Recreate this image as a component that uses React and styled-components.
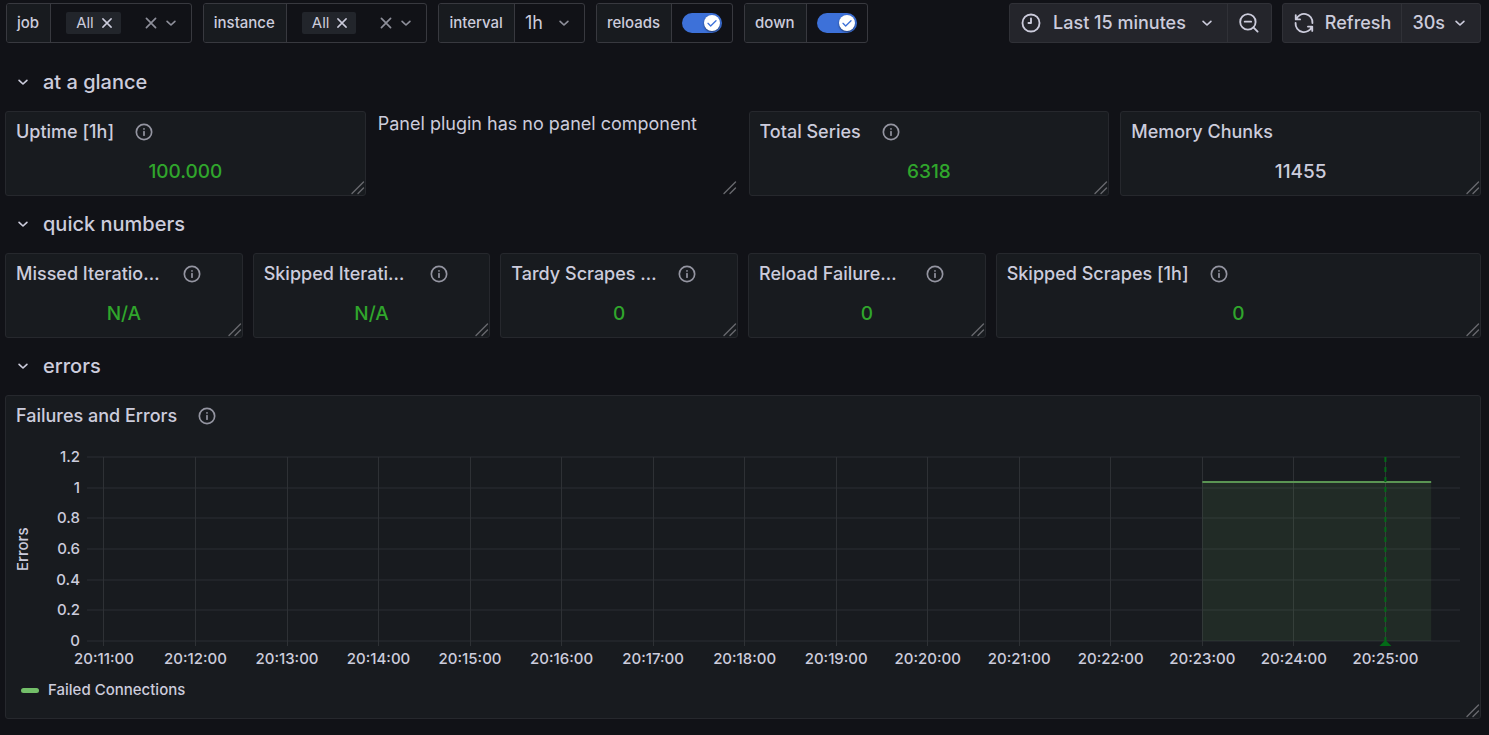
import React, { useId } from "react";
import styled, { createGlobalStyle } from "styled-components";

const color = {
  page: "#111217",
  panel: "#181b1f",
  panelBorder: "#26282d",
  fieldBorder: "#38393f",
  button: "#24252b",
  buttonBorder: "#303137",
  text: "#ccccdc",
  muted: "#8e8f9a",
  good: "#30a62c",
  series: "#73bf69",
  annotation: "#036b17",
  primary: "#3d71d9",
};

const GlobalStyle = createGlobalStyle`
  *, *::before, *::after { box-sizing: border-box; }
  body {
    margin: 0;
    background: ${color.page};
    color: ${color.text};
    font-family: Inter, "Liberation Sans", sans-serif;
    font-size: 18px;
    line-height: 24px;
  }
  button, input, select { font: inherit; color: inherit; }
`;

const Page = styled.div`
  padding: 3px 8px 17px 5px;
`;

/* ---------- icons ---------- */

const Svg = styled.svg`
  display: block;
  flex: none;
  width: ${(p) => p.$size}px;
  height: ${(p) => p.$size}px;
  fill: none;
  stroke: currentColor;
  stroke-width: ${(p) => p.$weight || 2};
  stroke-linecap: round;
  stroke-linejoin: round;
`;

const Chevron = ({ size = 20 }) => (
  <Svg $size={size} viewBox="0 0 24 24" aria-hidden="true">
    <path d="M7.3 10l4.7 4.4L16.7 10" />
  </Svg>
);

const Cross = ({ size = 20 }) => (
  <Svg $size={size} viewBox="0 0 24 24" aria-hidden="true">
    <path d="M6.5 6.5l11 11M17.5 6.5l-11 11" />
  </Svg>
);

const InfoIcon = () => (
  <Svg $size={20} viewBox="0 0 24 24" aria-hidden="true">
    <circle cx="12" cy="12" r="9.2" />
    <path d="M12 11.6v4.2M12 8.2v.1" />
  </Svg>
);

const ClockIcon = () => (
  <Svg $size={22} viewBox="0 0 24 24" aria-hidden="true">
    <circle cx="12" cy="12" r="9.3" />
    <path d="M12 7v5H9.2" />
  </Svg>
);

const ZoomOutIcon = () => (
  <Svg $size={22} viewBox="0 0 24 24" aria-hidden="true">
    <circle cx="10.8" cy="10.8" r="8.4" />
    <path d="M7.3 10.5h7M16.8 16.8l4.6 4.6" />
  </Svg>
);

const SyncIcon = () => (
  <Svg $size={22} viewBox="0 0 24 24" aria-hidden="true">
    <path d="M3 3.4v4.7h4.7M3.4 8.1A9.2 9.2 0 0 1 21.2 12M21 20.6v-4.7h-4.7M20.6 15.9A9.2 9.2 0 0 1 2.8 12" />
  </Svg>
);

/* ---------- toolbar ---------- */

const Toolbar = styled.header`
  display: flex;
  justify-content: space-between;
  padding-left: 1px;
  margin-bottom: 11px;
`;

const Group = styled.div`
  display: flex;
  gap: ${(p) => p.$gap}px;
`;

const Variable = styled.div`
  display: flex;
  height: 40px;
  border: 1px solid ${color.fieldBorder};
  border-radius: 3px;
`;

const VariableLabel = styled.label`
  display: flex;
  align-items: center;
  padding: 0 11px 0 10px;
  background: ${color.panel};
  border-right: 1px solid ${color.fieldBorder};
  border-radius: 2px 0 0 2px;
  font-size: 15px;
  font-weight: 500;
`;

const MultiValue = styled.div`
  display: flex;
  align-items: center;
  padding: 0 10px 0 15px;
  color: ${color.muted};
`;

const Chip = styled.span`
  display: flex;
  align-items: center;
  gap: 4px;
  height: 22px;
  margin-right: 20px;
  padding: 0 5px 0 10px;
  border-radius: 2px;
  background: #22252b;
  color: ${color.text};
  font-size: 15px;
`;

const IconButton = styled.button`
  display: flex;
  padding: 0;
  border: 0;
  background: none;
`;

const SelectBox = styled.div`
  display: grid;
  grid-template-columns: 1fr 30px;
  align-items: center;
  color: ${color.muted};
`;

const Select = styled.select`
  grid-area: 1 / 1 / 2 / 3;
  width: 69px;
  height: 38px;
  padding: 0 0 0 10px;
  appearance: none;
  border: 0;
  background: none;
  color: ${color.text};
`;

const SelectArrow = styled.span`
  grid-area: 1 / 2;
  pointer-events: none;
`;

const SwitchCell = styled.div`
  display: flex;
  align-items: center;
  padding: 0 10px;
`;

const Switch = styled.span`
  display: grid;
  align-items: center;
  justify-items: end;
`;

const SwitchInput = styled.input`
  grid-area: 1 / 1;
  appearance: none;
  width: 40px;
  height: 20px;
  margin: 0;
  border-radius: 10px;
  background: ${color.primary};
`;

const SwitchKnob = styled.span`
  grid-area: 1 / 1;
  width: 16px;
  height: 16px;
  margin-right: 2px;
  border-radius: 50%;
  background: #fff;
  color: ${color.primary};
  box-shadow: 0 1px 2px rgba(0, 0, 0, 0.5);
  pointer-events: none;
`;

const ButtonGroup = styled.div`
  display: flex;
  height: 40px;
  border: 1px solid ${color.buttonBorder};
  border-radius: 3px;
  background: ${color.button};
`;

const ToolButton = styled.button`
  display: flex;
  align-items: center;
  gap: ${(p) => p.$gap || 10}px;
  padding: ${(p) => p.$pad || "0 10px"};
  border: 0;
  background: none;
  font-weight: 500;
  & + & { border-left: 1px solid ${color.buttonBorder}; }
`;

function MultiVariable({ name }) {
  const id = useId();
  return (
    <Variable>
      <VariableLabel as="span" id={id}>{name}</VariableLabel>
      <MultiValue role="group" aria-labelledby={id}>
        <Chip>
          All
          <IconButton type="button" aria-label="Remove All"><Cross size={18} /></IconButton>
        </Chip>
        <IconButton type="button" aria-label={`Clear ${name}`}><Cross /></IconButton>
        <IconButton type="button" aria-label={`Open ${name}`}><Chevron /></IconButton>
      </MultiValue>
    </Variable>
  );
}

function SwitchVariable({ name }) {
  const id = useId();
  return (
    <Variable>
      <VariableLabel htmlFor={id}>{name}</VariableLabel>
      <SwitchCell>
        <Switch>
          <SwitchInput id={id} type="checkbox" defaultChecked />
          <SwitchKnob>
            <Svg $size={16} viewBox="0 0 24 24" aria-hidden="true">
              <path d="M6 12.5l4 4 8-8" />
            </Svg>
          </SwitchKnob>
        </Switch>
      </SwitchCell>
    </Variable>
  );
}

/* ---------- rows and panels ---------- */

const RowHeader = styled.h2`
  display: flex;
  align-items: center;
  height: 57px;
  margin: 0;
  padding-bottom: 2px;
  font-size: 20px;
  font-weight: 500;
`;

const RowToggle = styled.button`
  display: flex;
  align-items: center;
  gap: 10px;
  padding: 0 8px;
  border: 0;
  background: none;
`;

const Grid = styled.div`
  display: grid;
  grid-template-columns: repeat(${(p) => p.$columns}, minmax(0, 1fr));
  gap: ${(p) => p.$gap || 10}px;
`;

const PanelBox = styled.section`
  position: relative;
  grid-column: span ${(p) => p.$span || 1};
  min-height: 85px;
  border: 1px solid ${(p) => (p.$bare ? "transparent" : color.panelBorder)};
  border-radius: 3px;
  background: ${(p) => (p.$bare ? "none" : color.panel)};
`;

const PanelHeader = styled.div`
  display: flex;
  align-items: center;
  gap: 20px;
  height: 40px;
  padding: 0 40px 0 10px;
`;

const PanelTitle = styled.h3`
  margin: 0;
  overflow: hidden;
  white-space: nowrap;
  text-overflow: ellipsis;
  font-size: 18px;
  font-weight: 500;
`;

const InfoButton = styled(IconButton)`
  color: #9495a1;
`;

const Stat = styled.p`
  margin: 8px 0 0;
  text-align: center;
  font-size: 19px;
  font-weight: 500;
  color: ${(p) => (p.$plain ? color.text : color.good)};
`;

const Message = styled.p`
  margin: 0;
`;

const Corner = styled(Svg)`
  position: absolute;
  right: 0;
  bottom: 0;
  color: #67686e;
`;

function Panel({ title, info, children, span, bare }) {
  return (
    <PanelBox $span={span} $bare={bare}>
      {title && (
        <PanelHeader>
          <PanelTitle>{title}</PanelTitle>
          {info && (
            <InfoButton type="button" aria-label={`About ${title}`}><InfoIcon /></InfoButton>
          )}
        </PanelHeader>
      )}
      {children}
      <Corner $size={14} viewBox="0 0 14 14" $weight={1.4} aria-hidden="true">
        <path d="M1 12.5L12.5 1M7 12.5l5.5-5.5" />
      </Corner>
    </PanelBox>
  );
}

function Row({ title, columns, gap, children }) {
  return (
    <section>
      <RowHeader>
        <RowToggle type="button" aria-expanded="true"><Chevron />{title}</RowToggle>
      </RowHeader>
      <Grid $columns={columns} $gap={gap}>{children}</Grid>
    </section>
  );
}

/* ---------- chart ---------- */

const Chart = styled.div`
  display: flex;
  padding: 21px 20px 0 7px;
  font-size: 15px;
  font-weight: 500;
  line-height: 20px;
`;

const AxisName = styled.div`
  align-self: flex-start;
  height: 184px;
  writing-mode: vertical-rl;
  transform: rotate(180deg);
  text-align: center;
`;

const AxisTicks = styled.div`
  display: flex;
  flex-direction: column;
  justify-content: space-between;
  align-items: flex-end;
  width: 47px;
  height: 204px;
  margin: -10px 7px 0 0;
`;

const Plot = styled.svg`
  flex: 1;
  min-width: 0;
  height: 213px;
  overflow: visible;
  text { fill: ${color.text}; text-anchor: middle; }
`;

const Legend = styled.div`
  display: flex;
  align-items: center;
  gap: 9px;
  margin: 10px 0 18px;
  padding: 0 15px;
  font-size: 15px;
  font-weight: 500;
  line-height: 20px;
`;

const LegendMark = styled.span`
  width: 18px;
  height: 5px;
  border-radius: 3px;
  background: ${color.series};
`;

const PLOT_HEIGHT = 184;
const MINUTES = 15;
const FIRST_TICK = 0.185;
const yTicks = ["1.2", "1", "0.8", "0.6", "0.4", "0.2", "0"];
const xTicks = Array.from({ length: 15 }, (_, i) => `20:${11 + i}:00`);
const at = (minute) => `${((FIRST_TICK + minute) / MINUTES) * 100}%`;

function ErrorsChart() {
  const yOf = (v) => Math.round(PLOT_HEIGHT * (1 - v / 1.2));
  const level = 25;
  const span = `${(2.5 / MINUTES) * 100}%`;
  return (
    <Chart>
      <AxisName>Errors</AxisName>
      <AxisTicks>{yTicks.map((t) => <span key={t}>{t}</span>)}</AxisTicks>
      <Plot role="img" aria-label="Failed connections over time">
        {yTicks.map((t) => (
          <rect key={t} x="0" y={yOf(Number(t)) - 1} width="100%" height="2" fill="#212429" />
        ))}
        {xTicks.map((t, i) => (
          <line key={t} x1={at(i)} x2={at(i)} y1="0" y2="189" stroke="#2e3135" shapeRendering="crispEdges" />
        ))}
        <rect x={at(12)} y={level} width={span} height={PLOT_HEIGHT - level} fill={color.series} fillOpacity="0.1" />
        <rect x={at(12)} y={level - 1} width={span} height="2" fill="#5a9453" />
        <line x1={at(14)} x2={at(14)} y1="0" y2="184" stroke={color.annotation} strokeWidth="2" strokeDasharray="5 5" />
        <svg x={at(14)} y="184" overflow="visible">
          <path d="M0 -1l6 6h-12z" fill={color.annotation} />
        </svg>
        {xTicks.map((t, i) => <text key={t} x={at(i)} y="207">{t}</text>)}
      </Plot>
    </Chart>
  );
}

/* ---------- page ---------- */

export default function App() {
  const intervalId = useId();
  return (
    <Page>
      <GlobalStyle />
      <Toolbar>
        <Group $gap={11}>
          <MultiVariable name="job" />
          <MultiVariable name="instance" />
          <Variable>
            <VariableLabel htmlFor={intervalId}>interval</VariableLabel>
            <SelectBox>
              <Select id={intervalId} defaultValue="1h"><option>1h</option></Select>
              <SelectArrow><Chevron /></SelectArrow>
            </SelectBox>
          </Variable>
          <SwitchVariable name="reloads" />
          <SwitchVariable name="down" />
        </Group>
        <Group $gap={10}>
          <ButtonGroup>
            <ToolButton type="button" $gap={11}><ClockIcon />Last 15 minutes<Chevron /></ToolButton>
            <ToolButton type="button" aria-label="Zoom out" $pad="0 11px 0 10px"><ZoomOutIcon /></ToolButton>
          </ButtonGroup>
          <ButtonGroup>
            <ToolButton type="button"><SyncIcon />Refresh</ToolButton>
            <ToolButton type="button" $gap={5}>30s<Chevron /></ToolButton>
          </ButtonGroup>
        </Group>
      </Toolbar>

      <Row title="at a glance" columns={4} gap={11}>
        <Panel title="Uptime [1h]" info><Stat>100.000</Stat></Panel>
        <Panel bare><Message>Panel plugin has no panel component</Message></Panel>
        <Panel title="Total Series" info><Stat>6318</Stat></Panel>
        <Panel title="Memory Chunks"><Stat $plain>11455</Stat></Panel>
      </Row>

      <Row title="quick numbers" columns={6}>
        <Panel title="Missed Iterations [1h]" info><Stat>N/A</Stat></Panel>
        <Panel title="Skipped Iterations [1h]" info><Stat>N/A</Stat></Panel>
        <Panel title="Tardy Scrapes [1h]" info><Stat>0</Stat></Panel>
        <Panel title="Reload Failures [1h]" info><Stat>0</Stat></Panel>
        <Panel title="Skipped Scrapes [1h]" info span={2}><Stat>0</Stat></Panel>
      </Row>

      <Row title="errors" columns={1}>
        <Panel title="Failures and Errors" info>
          <ErrorsChart />
          <Legend><LegendMark />Failed Connections</Legend>
        </Panel>
      </Row>
    </Page>
  );
}
